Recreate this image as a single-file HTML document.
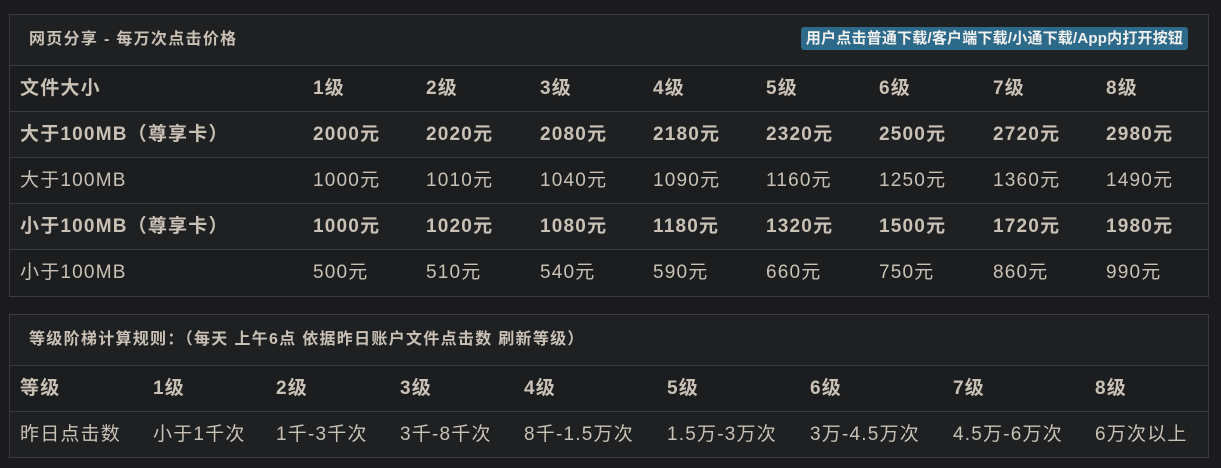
<!DOCTYPE html><html><head><meta charset="utf-8"><style>
body{margin:0;background:#1b1b1d;width:1221px;height:468px;overflow:hidden;font-family:"Liberation Sans","Noto Sans CJK SC",sans-serif;color:#c9c1b5}
.p{position:absolute;left:9px;width:1198px;border:1px solid #3a3b3d;background:#1c1d1f}
.h{height:50px;border-bottom:1px solid #3a3b3d;background:#1e2022;position:relative;font-weight:bold;font-size:16px;letter-spacing:1.3px;line-height:50px;padding-left:19px}
.r{height:45px;border-bottom:1px solid #3a3b3d;position:relative;font-size:19px;letter-spacing:1.2px;line-height:45px}
.r:last-child{border-bottom:none}
.r span{position:absolute;top:0;white-space:nowrap}
.b{font-weight:bold}
.alt{background:#1e2022}
.badge{position:absolute;left:791px;top:12px;height:23px;width:387px;background:#2d6a8a;border-radius:3px;color:#f0f0f0;font-size:15px;letter-spacing:0.2px;line-height:23px;text-align:center}
</style></head><body>
<div class="p" style="top:14px;height:281px">
<div class="h">网页分享 - 每万次点击价格<div class="badge">用户点击普通下载/客户端下载/小通下载/App内打开按钮</div></div>
<div class="r b"><span style="left:10px">文件大小</span><span style="left:303px">1级</span><span style="left:416px">2级</span><span style="left:530px">3级</span><span style="left:643px">4级</span><span style="left:756px">5级</span><span style="left:869px">6级</span><span style="left:983px">7级</span><span style="left:1096px">8级</span></div>
<div class="r b alt"><span style="left:10px">大于100MB（尊享卡）</span><span style="left:303px">2000元</span><span style="left:416px">2020元</span><span style="left:530px">2080元</span><span style="left:643px">2180元</span><span style="left:756px">2320元</span><span style="left:869px">2500元</span><span style="left:983px">2720元</span><span style="left:1096px">2980元</span></div>
<div class="r"><span style="left:10px">大于100MB</span><span style="left:303px">1000元</span><span style="left:416px">1010元</span><span style="left:530px">1040元</span><span style="left:643px">1090元</span><span style="left:756px">1160元</span><span style="left:869px">1250元</span><span style="left:983px">1360元</span><span style="left:1096px">1490元</span></div>
<div class="r b alt"><span style="left:10px">小于100MB（尊享卡）</span><span style="left:303px">1000元</span><span style="left:416px">1020元</span><span style="left:530px">1080元</span><span style="left:643px">1180元</span><span style="left:756px">1320元</span><span style="left:869px">1500元</span><span style="left:983px">1720元</span><span style="left:1096px">1980元</span></div>
<div class="r"><span style="left:10px">小于100MB</span><span style="left:303px">500元</span><span style="left:416px">510元</span><span style="left:530px">540元</span><span style="left:643px">590元</span><span style="left:756px">660元</span><span style="left:869px">750元</span><span style="left:983px">860元</span><span style="left:1096px">990元</span></div>
</div>
<div class="p" style="top:314px;height:142px">
<div class="h">等级阶梯计算规则：（每天 上午6点 依据昨日账户文件点击数 刷新等级）</div>
<div class="r b"><span style="left:10px">等级</span><span style="left:143px">1级</span><span style="left:266px">2级</span><span style="left:390px">3级</span><span style="left:514px">4级</span><span style="left:657px">5级</span><span style="left:800px">6级</span><span style="left:943px">7级</span><span style="left:1085px">8级</span></div>
<div class="r alt"><span style="left:10px">昨日点击数</span><span style="left:143px">小于1千次</span><span style="left:266px">1千-3千次</span><span style="left:390px">3千-8千次</span><span style="left:514px">8千-1.5万次</span><span style="left:657px">1.5万-3万次</span><span style="left:800px">3万-4.5万次</span><span style="left:943px">4.5万-6万次</span><span style="left:1085px">6万次以上</span></div>
</div>
</body></html>
